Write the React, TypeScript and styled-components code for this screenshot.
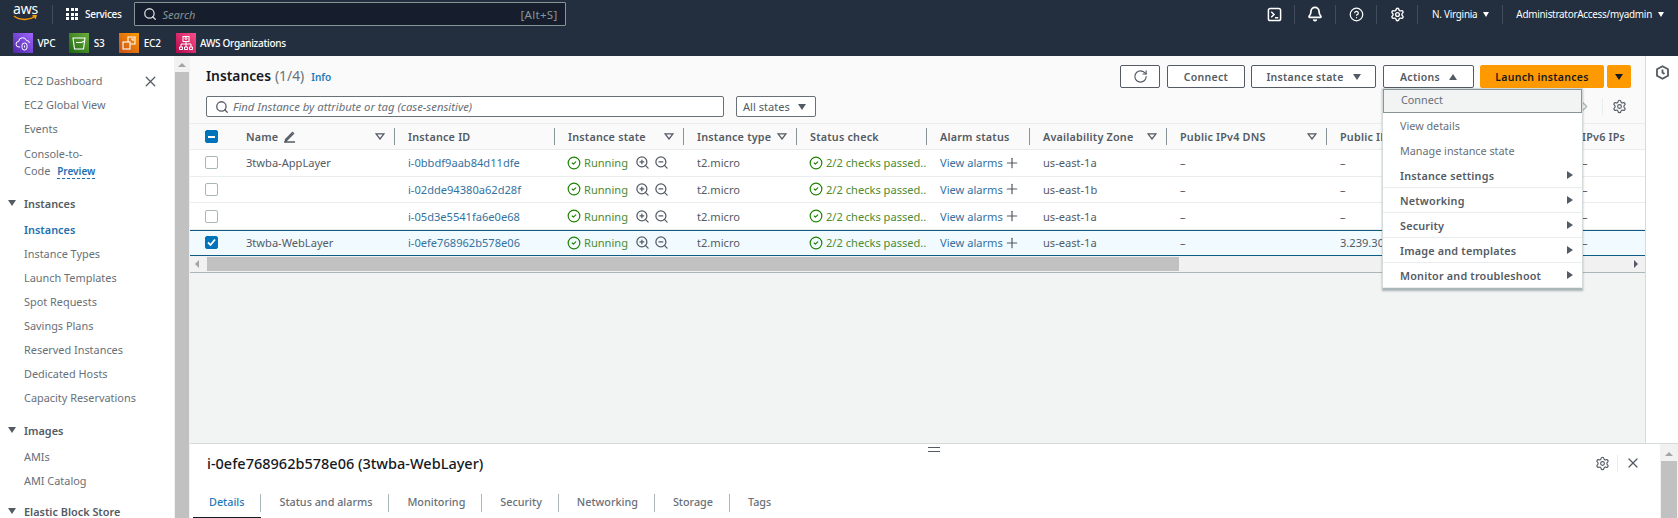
import React from "react";
import styled, { createGlobalStyle } from "styled-components";
import { Search, X, RotateCw, CircleCheck, ZoomIn, ZoomOut, Plus, Bell, CircleHelp, Settings, ChevronRight } from "lucide-react";

const Global = createGlobalStyle`
  html, body { margin: 0; padding: 0; background: #fff; overflow: hidden; }
  body { font-family: "Noto Sans", "Liberation Sans", sans-serif; font-size: 11.1px; color: #545b64; }
  * { box-sizing: border-box; }
`;

const Page = styled.div`width: 1678px; height: 518px; display: flex; flex-direction: column; overflow: hidden;`;
const Nav = styled.header`height: 56px; background: #232f3e; flex: none; display: flex; flex-direction: column; color: #fff;`;
const NavTop = styled.div`height: 28px; flex: none; display: flex; align-items: center; padding-left: 13px;`;
const Logo = styled.div`width: 25px; height: 22px; display: flex; flex-direction: column; align-items: center; line-height: 12px; font-size: 14px; letter-spacing: -0.2px;`;
const NavSep = styled.span`width: 1px; height: 19px; background: #414d5c; flex: none; margin: ${p => p.$m || "0"};`;
const Grid9 = styled.div`display: grid; grid-template-columns: repeat(3, 3px); gap: 1.5px; margin: 0 7px 0 0;`;
const Dot = styled.i`width: 3px; height: 3px; background: #fff; display: block;`;
const NavLabel = styled.span`font-size: 10px; letter-spacing: -0.3px; font-weight: 500;`;
const SearchBox = styled.div`width: 432px; height: 24px; margin-left: 12px; background: #161e2d; border: 1px solid #879596; border-radius: 1px; display: flex; align-items: center; padding: 0 7px 0 8px; color: #aab7b8;`;
const SearchHint = styled.em`margin-left: 6px; flex: 1; font-size: 11px; color: #879596;`;
const Kbd = styled.span`font-size: 11.5px; letter-spacing: .3px; color: #879596;`;
const NavRight = styled.div`margin-left: auto; display: flex; align-items: center;`;
const NavIcon = styled.span`width: 40px; display: flex; justify-content: center; align-items: center;`;
const Caret = styled.span`width: 0; height: 0; border-left: ${p => p.$small ? 3 : 4}px solid transparent; border-right: ${p => p.$small ? 3 : 4}px solid transparent; border-top: ${p => p.$small ? 5 : 6}px solid ${p => p.$c || "#fff"}; display: inline-block; flex: none;`;
const CaretUp = styled(Caret)`transform: rotate(180deg);`;
const Region = styled.span`font-size: 9.9px; letter-spacing: -0.25px; display: flex; align-items: center; gap: 6px; padding: ${p => p.$pad};`;
const NavBottom = styled.div`height: 28px; flex: none; display: flex; align-items: center; padding: 2px 0 0 13px;`;
const Fav = styled.div`display: flex; align-items: center; gap: 4.500px; font-size: 10px; font-weight: 500; letter-spacing: -0.3px; margin-right: ${p => p.$mr}px;`;
const FavIcon = styled.span`width: 20px; height: 20px; display: flex; align-items: center; justify-content: center; background: linear-gradient(45deg, ${p => p.$a}, ${p => p.$b});`;

const Body = styled.div`flex: 1; display: flex; min-height: 0;`;
const Sidebar = styled.nav`width: 174px; flex: none; overflow: hidden; padding: 13px 0 0 24px; position: relative; font-size: 10.9px;`;
const NavItem = styled.div`height: 24px; line-height: 24px; white-space: nowrap; color: ${p => p.$active ? "#1f6fb0" : "#687078"}; font-weight: ${p => p.$active ? 600 : 400};`;
const NavItemTall = styled.div`height: 40px; line-height: 17px; padding-top: 4px; color: #687078;`;
const Preview = styled.span`color: #1f6fb0; font-weight: 600; font-size: 10px; margin-left: 4px; border-bottom: 1px dashed #1f6fb0;`;
const NavGroup = styled.div`height: 24px; margin: ${p => p.$mt}px 0 3px -16px; display: flex; align-items: center; gap: 8px; font-weight: 600; color: #545b64; white-space: nowrap;`;
const CloseBtn = styled.span`position: absolute; left: 142px; top: 17px; color: #545b64; display: flex;`;
const VScroll = styled.div`width: ${p => p.$w || 16}px; flex: none; background: #f1f1f1; display: flex; flex-direction: column; align-items: center; padding: ${p => p.$top || 7}px 1px 0;`;
const UpArrow = styled.span`width: 0; height: 0; border-left: 4px solid transparent; border-right: 4px solid transparent; border-bottom: 4px solid #a3a3a3; flex: none;`;
const VThumb = styled.div`flex: 1; width: 100%; background: #c1c1c1; margin-top: 5px;`;

const Content = styled.div`flex: 1; display: flex; flex-direction: column; min-width: 0;`;
const Upper = styled.div`height: 387px; flex: none; display: flex;`;
const Main = styled.main`flex: 1; min-width: 0; background: #f2f3f3; display: flex; flex-direction: column; position: relative; border-right: 1px solid #d5dbdb;`;
const Rail = styled.aside`width: 32px; flex: none; background: #fff; display: flex; justify-content: center; padding: 9px 0 0 1px; color: #545b64;`;
const PanelHead = styled.div`height: 67px; flex: none; background: #fafafa; padding: 9px 14px 0 16px; display: flex; flex-direction: column;`;
const HeadRow = styled.div`display: flex; align-items: center; height: 23px;`;
const Title = styled.h1`margin: -3px 0 0; font-size: 13.8px; font-weight: 600; color: #16191f; display: flex; align-items: baseline;`;
const Count = styled.span`font-weight: 400; color: #687078; margin-left: 4px;`;
const InfoLink = styled.span`font-size: 10px; font-weight: 600; color: #1f7ab8; margin-left: 7px;`;
const Btn = styled.button`height: 23px; margin-left: ${p => p.$ml ?? 7}px; width: ${p => p.$w}px; flex: none; background: #fff; border: 1px solid #545b64; border-radius: 2px; font: 600 10.5px "Noto Sans", sans-serif; color: #545b64; letter-spacing: 0.3px; display: flex; align-items: center; justify-content: center; gap: 9px; padding: 0;`;
const Primary = styled(Btn)`background: #ff9900; border-color: #ff9900; color: #16191f;`;
const Buttons = styled.div`margin-left: auto; display: flex;`;
const FilterRow = styled(HeadRow)`margin-top: 8px; height: 21px;`;
const Find = styled.div`width: 518px; height: 21px; background: #fff; border: 1px solid #687078; border-radius: 2px; display: flex; align-items: center; padding: 0 8px; color: #545b64;`;
const FindHint = styled.em`margin-left: 4px; color: #687078; font-size: 11.300px;`;
const StateSel = styled.div`width: 80px; height: 21px; margin-left: 12px; background: #fff; border: 1px solid #687078; border-radius: 2px; display: flex; align-items: center; justify-content: space-between; padding: 0 9px 0 6px; color: #545b64;`;
const Pager = styled.div`margin-left: auto; margin-right: 4px; display: flex; align-items: center; color: #aab7b8; height: 21px;`;
const PagerSep = styled.span`width: 1px; height: 17px; background: #eaeded; margin: 0 9px 0 9px;`;
const GearDark = styled.span`color: #545b64; display: flex;`;

const cols = "46px 159px 160px 129px 113px 130px 103px 137px 160px 242px 1fr";
const HeadGrid = styled.div`display: grid; grid-template-columns: ${cols}; height: 27px; background: #fafafa; border-top: 1px solid #eaeded; border-bottom: 1px solid #eaeded; flex: none; align-items: center;`;
const HCell = styled.div`height: 17px; display: flex; align-items: center; padding: 0 9px 0 ${p => p.$pl ?? 13}px; font-weight: 600; font-size: 10.8px; letter-spacing: .2px; color: #545b64; white-space: nowrap; border-right: ${p => p.$noline ? "none" : "1px solid #879596"}; overflow: hidden;`;
const HCheck = styled.div`padding-left: 15px; display: flex; align-items: center; height: 100%;`;
const Check = styled.span`width: 13px; height: 13px; border-radius: 2px; flex: none; display: flex; align-items: center; justify-content: center; background: ${p => p.$on ? "#0073bb" : "#fff"}; border: 1px solid ${p => p.$on ? "#0073bb" : "#aab7b8"};`;
const Minus = styled.i`width: 7px; height: 2px; background: #fff; display: block;`;
const FilterTri = styled.svg`margin-left: auto; flex: none;`;
const Row = styled.div`display: grid; grid-template-columns: ${cols}; height: ${p => p.$sel ? 26 : 26.67}px; flex: none; align-items: center; background: ${p => p.$sel ? "#f1faff" : "#fff"}; border-bottom: 1px solid ${p => p.$sel ? "#0d5c84" : "#eaeded"}; border-top: ${p => p.$sel ? "1px solid #0d5c84" : "none"}; white-space: nowrap;`;
const RCell = styled.div`padding-left: ${p => p.$pl ?? 13}px; display: flex; align-items: center; overflow: hidden; color: #545b64;`;
const RCheck = styled.div`padding-left: 15px; display: flex;`;
const Link = styled.span`color: #33729f;`;
const Ok = styled.span`color: #4d8b31; margin-left: 3px;`;
const OkIcon = styled.span`color: #1d8102; display: flex;`;
const IconGap = styled.span`display: flex; margin-left: ${p => p.$ml}px; color: #545b64;`;
const HScroll = styled.div`height: 17px; flex: none; background: #f1f1f1; border-bottom: 1px solid #aab7b8; display: flex; align-items: center; padding-right: 7px;`;
const SideArrow = styled.span`width: 0; height: 0; border-top: 4px solid transparent; border-bottom: 4px solid transparent; ${p => p.$right ? "border-left: 4px solid #545b64;" : "border-right: 4px solid #a3a3a3; margin-left: 5px;"} flex: none;`;
const HThumb = styled.div`width: 972px; height: 14px; background: #c1c1c1; margin-left: 8px; margin-right: auto;`;

const Menu = styled.div`position: absolute; left: 1192px; top: 32px; width: 201px; background: #fff; border: 1px solid #d5dbdb; border-bottom: 2px solid #aab7b8; box-shadow: 0 1px 2px rgba(0,28,36,.3); z-index: 3; font-size: 10.8px;`;
const MenuItem = styled.div`height: ${p => p.$h || 25}px; display: flex; align-items: center; justify-content: space-between; padding: 0 9px ${p => p.$hot ? 3 : 0}px 17px; font-weight: ${p => p.$group ? 600 : 400}; color: ${p => p.$group ? "#545b64" : "#687078"}; background: ${p => p.$hot ? "#f2f3f3" : "#fff"}; border: ${p => p.$hot ? "1px solid #879596" : "none"}; border-bottom: ${p => p.$hot ? "1px solid #879596" : p.$group ? "1px solid #eaeded" : "none"}; letter-spacing: ${p => p.$group ? "0.2px" : "0"};`;
const MenuArrow = styled.span`width: 0; height: 0; border-top: 4px solid transparent; border-bottom: 4px solid transparent; border-left: 6px solid #545b64;`;

const Details = styled.section`flex: 1; min-height: 0; display: flex; border-top: 1px solid #d5dbdb; background: #fff; position: relative;`;
const DetailsBody = styled.div`flex: 1; min-width: 0; padding: 9px 0 0 3px; display: flex; flex-direction: column;`;
const DetailsHead = styled.div`display: flex; align-items: center; height: 20px; padding: 0 19px 0 14px;`;
const DetailsTitle = styled.h2`margin: 0; font-size: 14.500px; font-weight: 500; color: #16191f;`;
const DetailsTools = styled.div`margin-left: auto; display: flex; align-items: center; color: #545b64;`;
const DetailsSep = styled.span`width: 1px; height: 17px; background: #eaeded; margin: 0 7px 0 7px;`;
const Handle = styled.div`position: absolute; left: 738px; top: 3px; width: 12px; height: 5px; border-top: 1.5px solid #545b64; border-bottom: 1.5px solid #545b64;`;
const Tabs = styled.div`display: flex; margin-top: 21px; height: 25px;`;
const Tab = styled.div`height: 25px; display: flex; align-items: flex-start; position: relative;`;
const TabLabel = styled.span`padding: 0 16px 0 ${p => p.$first ? 16 : 18}px; height: 18px; line-height: 15px; border-right: ${p => p.$last ? "none" : "1px solid #aab7b8"}; color: ${p => p.$active ? "#1f7ab8" : "#687078"}; font-size: 10.8px; font-weight: 500; white-space: nowrap;`;
const TabLine = styled.i`position: absolute; left: 0; right: 0; bottom: 0; height: 2px; background: #16191f;`;

const Terminal = () => (
  <svg width="15" height="15" viewBox="0 0 16 16" fill="none" stroke="#fff" strokeWidth="1.6"><rect x="1.500" y="1.500" width="13" height="13" rx="2"/><path d="M4.500 5l3 3-3 3M8.500 11.500H12"/></svg>
);
const Tri = () => (
  <FilterTri width="10" height="7" viewBox="0 0 10 7" fill="none" stroke="#545b64" strokeWidth="1.300"><path d="M1 .8h8L5 6z"/></FilterTri>
);
const Pencil = () => (
  <svg width="13" height="13" viewBox="0 0 13 13" fill="none" stroke="#545b64" strokeWidth="1.400" style={{ marginLeft: 5 }}><path d="M1 12h11M2.500 9.500l7-7 1 1-7 7H2.500z"/></svg>
);
const IconVpc = () => (
  <svg width="16" height="16" viewBox="0 0 16 16" fill="none" stroke="#fff" strokeWidth="1"><path d="M5 12H4a2.800 2.800 0 0 1-.3-5.600A4 4 0 0 1 11.500 5.500 3 3 0 0 1 14.500 8"/><rect x="7" y="8" width="5" height="7" rx="2.500"/><path d="M9.500 10.500v2"/></svg>
);
const IconS3 = () => (
  <svg width="16" height="16" viewBox="0 0 16 16" fill="none" stroke="#fff" strokeWidth="1.100"><path d="M2 3h12l-1.500 11h-9z"/><path d="M5 7.500h5.500l3-1.500"/></svg>
);
const IconEc2 = () => (
  <svg width="16" height="16" viewBox="0 0 16 16" fill="none" stroke="#fff" strokeWidth="1.100"><rect x="2" y="7" width="7" height="7"/><path d="M7 7V2h7v7H9"/><path d="M10 4h2v2"/></svg>
);
const IconOrg = () => (
  <svg width="16" height="16" viewBox="0 0 16 16" fill="none" stroke="#fff" strokeWidth="1"><rect x="5" y="1.500" width="6" height="5"/><circle cx="8" cy="3.500" r="1"/><path d="M8 6.500V9M3 12V9h10v3M8 9v3"/><path d="M1.500 12h3v2.500h-3zM6.500 12h3v2.500h-3zM11.500 12h3v2.500h-3z"/></svg>
);
const RailIcon = () => (
  <svg width="15" height="15" viewBox="0 0 15 15" fill="none" stroke="#545b64" strokeWidth="1.800"><path d="M7.500 1.200l5.500 3.100v6.400l-5.500 3.100L2 10.700V4.300z"/><path d="M7.500 4.500v3l2 1.500"/></svg>
);

const rows = [
  { name: "3twba-AppLayer", id: "i-0bbdf9aab84d11dfe", az: "us-east-1a", ip: "–" },
  { name: "", id: "i-02dde94380a62d28f", az: "us-east-1b", ip: "–" },
  { name: "", id: "i-05d3e5541fa6e0e68", az: "us-east-1a", ip: "–" },
  { name: "3twba-WebLayer", id: "i-0efe768962b578e06", az: "us-east-1a", ip: "3.239.30.12", sel: true },
];
const heads: [string, boolean][] = [["Instance ID", false], ["Instance state", true], ["Instance type", true], ["Status check", false], ["Alarm status", false], ["Availability Zone", true], ["Public IPv4 DNS", true], ["Public IPv4 address", true]];
const menu = ["View details", "Manage instance state"];
const groups = ["Instance settings", "Networking", "Security", "Image and templates", "Monitor and troubleshoot"];
const tabs = ["Details", "Status and alarms", "Monitoring", "Security", "Networking", "Storage", "Tags"];

export default function App() {
  return (
    <Page>
      <Global />
      <Nav>
        <NavTop>
          <Logo>aws<svg width="25" height="7" viewBox="0 0 25 7" fill="none"><path d="M1 1c6 4.500 15 4.500 21 .5M19.500 .8l3.500-.3-.8 3.200" stroke="#ff9900" strokeWidth="1.500"/></svg></Logo>
          <NavSep $m="0 13px 0 14px" />
          <Grid9>{Array.from({ length: 9 }).map((_, i) => <Dot key={i} />)}</Grid9>
          <NavLabel>Services</NavLabel>
          <SearchBox>
            <Search size={14} strokeWidth={2.2} color="#d5dbdb" />
            <SearchHint>Search</SearchHint>
            <Kbd>[Alt+S]</Kbd>
          </SearchBox>
          <NavRight>
            <NavIcon><Terminal /></NavIcon>
            <NavSep />
            <NavIcon><Bell size={16} strokeWidth={2.6} /></NavIcon>
            <NavSep />
            <NavIcon><CircleHelp size={15} strokeWidth={2} /></NavIcon>
            <NavSep />
            <NavIcon><Settings size={15} strokeWidth={2.2} /></NavIcon>
            <NavSep />
            <Region $pad="0 13px 0 14px">N. Virginia <Caret $small /></Region>
            <NavSep />
            <Region $pad="0 14px 0 13px">AdministratorAccess/myadmin <Caret $small /></Region>
          </NavRight>
        </NavTop>
        <NavBottom>
          <Fav $mr={14}><FavIcon $a="#4d27a8" $b="#a166ff"><IconVpc /></FavIcon>VPC</Fav>
          <Fav $mr={15}><FavIcon $a="#1b660f" $b="#6cae3e"><IconS3 /></FavIcon>S3</Fav>
          <Fav $mr={15}><FavIcon $a="#c8511b" $b="#ff9900"><IconEc2 /></FavIcon>EC2</Fav>
          <Fav $mr={0}><FavIcon $a="#b0084d" $b="#ff4f8b"><IconOrg /></FavIcon>AWS Organizations</Fav>
        </NavBottom>
      </Nav>
      <Body>
        <Sidebar>
          <CloseBtn><X size={17} strokeWidth={1.8} /></CloseBtn>
          <NavItem>EC2 Dashboard</NavItem>
          <NavItem>EC2 Global View</NavItem>
          <NavItem>Events</NavItem>
          <NavItemTall>Console-to-<br />Code <Preview>Preview</Preview></NavItemTall>
          <NavGroup $mt={10}><Caret $c="#545b64" />Instances</NavGroup>
          <NavItem $active>Instances</NavItem>
          <NavItem>Instance Types</NavItem>
          <NavItem>Launch Templates</NavItem>
          <NavItem>Spot Requests</NavItem>
          <NavItem>Savings Plans</NavItem>
          <NavItem>Reserved Instances</NavItem>
          <NavItem>Dedicated Hosts</NavItem>
          <NavItem>Capacity Reservations</NavItem>
          <NavGroup $mt={8}><Caret $c="#545b64" />Images</NavGroup>
          <NavItem>AMIs</NavItem>
          <NavItem>AMI Catalog</NavItem>
          <NavGroup $mt={6}><Caret $c="#545b64" />Elastic Block Store</NavGroup>
        </Sidebar>
        <VScroll><UpArrow /><VThumb /></VScroll>
        <Content>
          <Upper>
            <Main>
              <PanelHead>
                <HeadRow>
                  <Title>Instances<Count>(1/4)</Count><InfoLink>Info</InfoLink></Title>
                  <Buttons>
                    <Btn $w={40}><RotateCw size={15} strokeWidth={1.8} /></Btn>
                    <Btn $w={78}>Connect</Btn>
                    <Btn $w={125} $ml={6}>Instance state <Caret $c="#545b64" /></Btn>
                    <Btn $w={91}>Actions <CaretUp $c="#545b64" /></Btn>
                    <Primary $w={124} $ml={6}>Launch instances</Primary>
                    <Primary $w={24} $ml={3}><Caret $c="#16191f" /></Primary>
                  </Buttons>
                </HeadRow>
                <FilterRow>
                  <Find><Search size={14} strokeWidth={2.2} /><FindHint>Find Instance by attribute or tag (case-sensitive)</FindHint></Find>
                  <StateSel>All states <Caret $c="#545b64" /></StateSel>
                  <Pager><ChevronRight size={17} /><PagerSep /><GearDark><Settings size={15} strokeWidth={1.8} /></GearDark></Pager>
                </FilterRow>
              </PanelHead>
              <HeadGrid>
                <HCheck><Check $on><Minus /></Check></HCheck>
                <HCell $pl={10}>Name<Pencil /><Tri /></HCell>
                {heads.map(([h, f]) => <HCell key={h}>{h}{f && <Tri />}</HCell>)}
                <HCell $noline>IPv6 IPs</HCell>
              </HeadGrid>
              {rows.map(r => (
                <Row key={r.id} $sel={r.sel}>
                  <RCheck><Check $on={r.sel}>{r.sel && <svg width="9" height="9" viewBox="0 0 9 9" fill="none" stroke="#fff" strokeWidth="1.800"><path d="M1 4.500l2.500 2.500L8 1.500"/></svg>}</Check></RCheck>
                  <RCell $pl={10}>{r.name}</RCell>
                  <RCell><Link>{r.id}</Link></RCell>
                  <RCell $pl={12}>
                    <OkIcon><CircleCheck size={14} strokeWidth={2} /></OkIcon><Ok>Running</Ok>
                    <IconGap $ml={7}><ZoomIn size={15} strokeWidth={2} /></IconGap>
                    <IconGap $ml={4}><ZoomOut size={15} strokeWidth={2} /></IconGap>
                  </RCell>
                  <RCell>t2.micro</RCell>
                  <RCell $pl={12}><OkIcon><CircleCheck size={14} strokeWidth={2} /></OkIcon><Ok>2/2 checks passed..</Ok></RCell>
                  <RCell><Link>View alarms</Link><IconGap $ml={1}><Plus size={16} strokeWidth={1.800} /></IconGap></RCell>
                  <RCell>{r.az}</RCell>
                  <RCell>–</RCell>
                  <RCell>{r.ip}</RCell>
                  <RCell>–</RCell>
                </Row>
              ))}
              <HScroll><SideArrow /><HThumb /><SideArrow $right /></HScroll>
              <Menu>
                <MenuItem $hot $h={24}>Connect</MenuItem>
                {menu.map(m => <MenuItem key={m}>{m}</MenuItem>)}
                {groups.map(g => <MenuItem key={g} $group>{g}<MenuArrow /></MenuItem>)}
              </Menu>
            </Main>
            <Rail><RailIcon /></Rail>
          </Upper>
          <Details>
            <Handle />
            <DetailsBody>
              <DetailsHead>
                <DetailsTitle>i-0efe768962b578e06 (3twba-WebLayer)</DetailsTitle>
                <DetailsTools><Settings size={15} strokeWidth={1.800} /><DetailsSep /><X size={16} strokeWidth={1.800} /></DetailsTools>
              </DetailsHead>
              <Tabs>
                {tabs.map((t, i) => (
                  <Tab key={t}>
                    <TabLabel $first={i === 0} $active={i === 0} $last={i === tabs.length - 1}>{t}</TabLabel>
                    {i === 0 && <TabLine />}
                  </Tab>
                ))}
              </Tabs>
            </DetailsBody>
            <VScroll $w={18} $top={8}><UpArrow /><VThumb /></VScroll>
          </Details>
        </Content>
      </Body>
    </Page>
  );
}
